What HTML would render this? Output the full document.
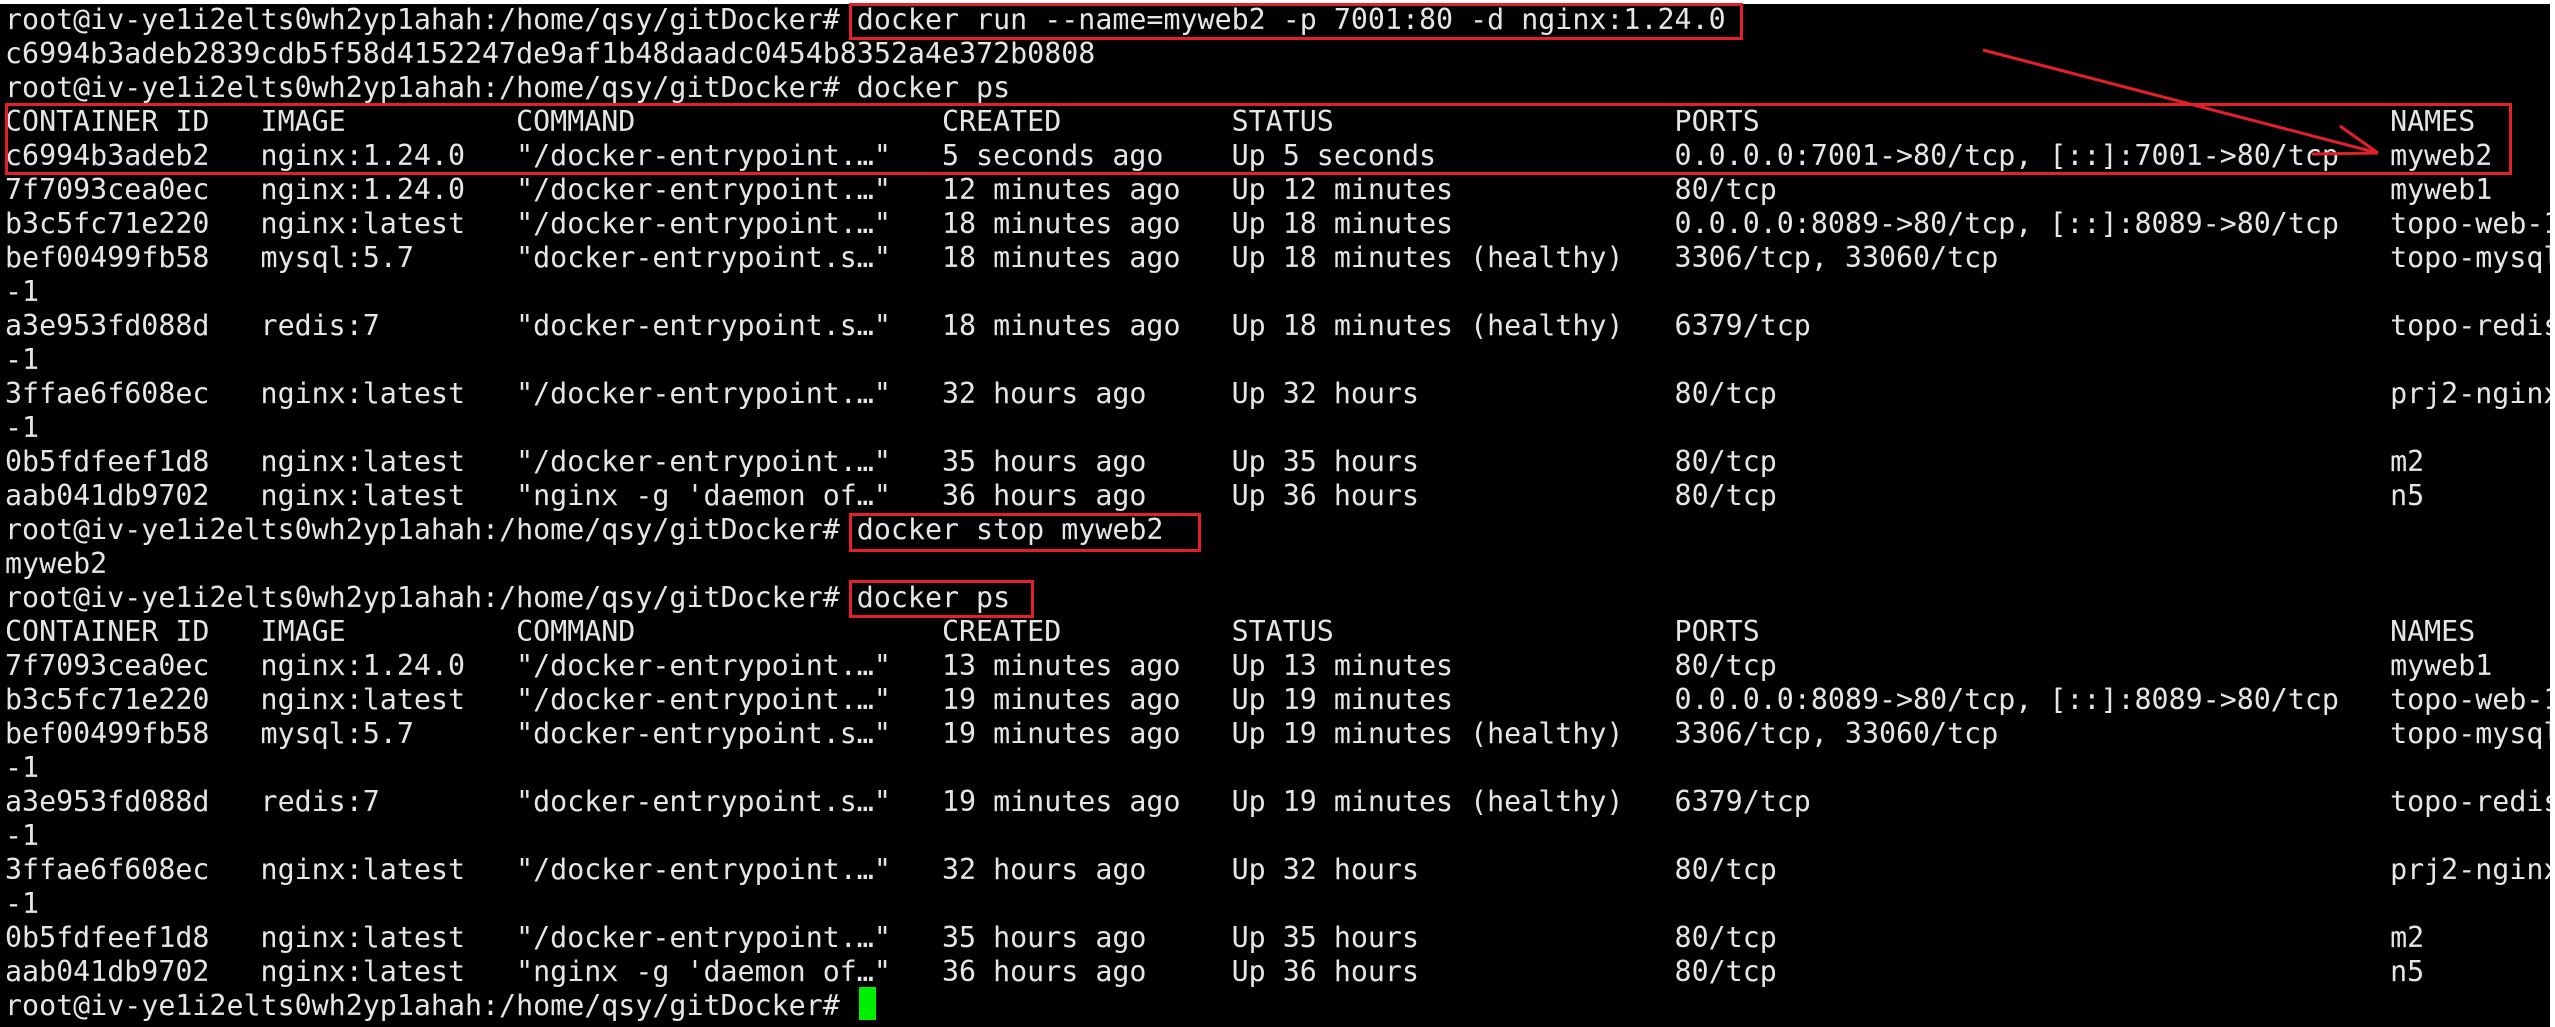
<!DOCTYPE html>
<html><head><meta charset="utf-8"><style>
html,body{margin:0;padding:0;background:#fff;width:2555px;height:1027px;overflow:hidden}
#t{position:absolute;left:0;top:4px;width:2550px;height:1023px;background:#000;overflow:hidden}
pre{margin:0;position:absolute;left:5px;top:-1px;font-family:"DejaVu Sans Mono","Liberation Mono",monospace;font-size:28.3px;line-height:34px;color:#e6e6e6;white-space:pre}
.b{position:absolute;border:3px solid #e3202a;box-sizing:border-box}
#cur{position:absolute;left:859px;top:987px;width:17px;height:33px;background:#00ee00}
</style></head><body><div id="t">
<pre>root@iv-ye1i2elts0wh2yp1ahah:/home/qsy/gitDocker# docker run --name=myweb2 -p 7001:80 -d nginx:1.24.0
c6994b3adeb2839cdb5f58d4152247de9af1b48daadc0454b8352a4e372b0808
root@iv-ye1i2elts0wh2yp1ahah:/home/qsy/gitDocker# docker ps
CONTAINER ID   IMAGE          COMMAND                  CREATED          STATUS                    PORTS                                     NAMES
c6994b3adeb2   nginx:1.24.0   "/docker-entrypoint.…"   5 seconds ago    Up 5 seconds              0.0.0.0:7001->80/tcp, [::]:7001->80/tcp   myweb2
7f7093cea0ec   nginx:1.24.0   "/docker-entrypoint.…"   12 minutes ago   Up 12 minutes             80/tcp                                    myweb1
b3c5fc71e220   nginx:latest   "/docker-entrypoint.…"   18 minutes ago   Up 18 minutes             0.0.0.0:8089->80/tcp, [::]:8089->80/tcp   topo-web-1
bef00499fb58   mysql:5.7      "docker-entrypoint.s…"   18 minutes ago   Up 18 minutes (healthy)   3306/tcp, 33060/tcp                       topo-mysql
-1
a3e953fd088d   redis:7        "docker-entrypoint.s…"   18 minutes ago   Up 18 minutes (healthy)   6379/tcp                                  topo-redis
-1
3ffae6f608ec   nginx:latest   "/docker-entrypoint.…"   32 hours ago     Up 32 hours               80/tcp                                    prj2-nginx
-1
0b5fdfeef1d8   nginx:latest   "/docker-entrypoint.…"   35 hours ago     Up 35 hours               80/tcp                                    m2
aab041db9702   nginx:latest   "nginx -g 'daemon of…"   36 hours ago     Up 36 hours               80/tcp                                    n5
root@iv-ye1i2elts0wh2yp1ahah:/home/qsy/gitDocker# docker stop myweb2
myweb2
root@iv-ye1i2elts0wh2yp1ahah:/home/qsy/gitDocker# docker ps
CONTAINER ID   IMAGE          COMMAND                  CREATED          STATUS                    PORTS                                     NAMES
7f7093cea0ec   nginx:1.24.0   "/docker-entrypoint.…"   13 minutes ago   Up 13 minutes             80/tcp                                    myweb1
b3c5fc71e220   nginx:latest   "/docker-entrypoint.…"   19 minutes ago   Up 19 minutes             0.0.0.0:8089->80/tcp, [::]:8089->80/tcp   topo-web-1
bef00499fb58   mysql:5.7      "docker-entrypoint.s…"   19 minutes ago   Up 19 minutes (healthy)   3306/tcp, 33060/tcp                       topo-mysql
-1
a3e953fd088d   redis:7        "docker-entrypoint.s…"   19 minutes ago   Up 19 minutes (healthy)   6379/tcp                                  topo-redis
-1
3ffae6f608ec   nginx:latest   "/docker-entrypoint.…"   32 hours ago     Up 32 hours               80/tcp                                    prj2-nginx
-1
0b5fdfeef1d8   nginx:latest   "/docker-entrypoint.…"   35 hours ago     Up 35 hours               80/tcp                                    m2
aab041db9702   nginx:latest   "nginx -g 'daemon of…"   36 hours ago     Up 36 hours               80/tcp                                    n5
root@iv-ye1i2elts0wh2yp1ahah:/home/qsy/gitDocker# </pre>
</div>
<div class="b" style="left:849px;top:3px;width:894px;height:37px"></div>
<div class="b" style="left:5px;top:103px;width:2507px;height:72px"></div>
<div class="b" style="left:849px;top:513px;width:352px;height:39px"></div>
<div class="b" style="left:849px;top:580px;width:185px;height:38px"></div>
<div id="cur"></div>
<svg style="position:absolute;left:0;top:0" width="2555" height="1027"><g stroke="#e3202a" stroke-width="3" fill="none"><line x1="1983" y1="50" x2="2378" y2="153"/><line x1="2340" y1="126" x2="2378" y2="153"/><line x1="2312" y1="154" x2="2378" y2="153"/></g></svg>
</body></html>
